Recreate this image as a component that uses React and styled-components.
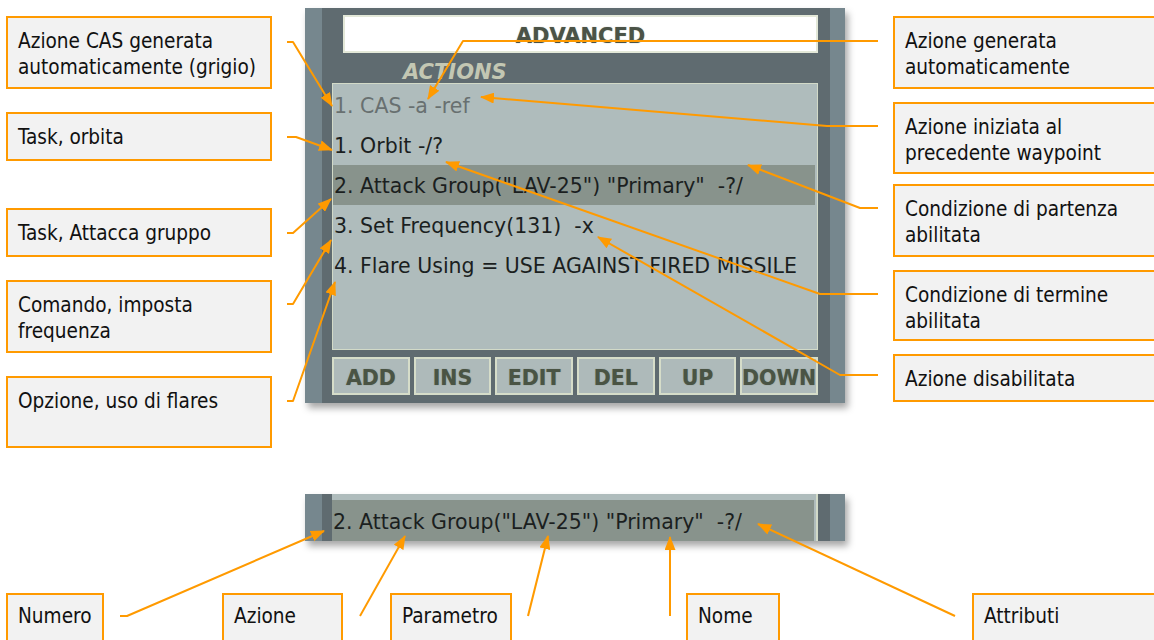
import React from 'react'
import styled, { createGlobalStyle } from 'styled-components'

const GlobalStyle = createGlobalStyle`
  html, body {
    margin: 0;
    padding: 0;
    background: #ffffff;
  }
  body {
    overflow: hidden;
  }
`

const Page = styled.div`
  position: relative;
  width: 1154px;
  height: 640px;
  overflow: hidden;
  background: #ffffff;
`

const Top = styled.div`
  display: flex;
  align-items: flex-start;
  padding-left: 6px;
`

const NoteColumn = styled.div`
  display: flex;
  flex-direction: column;
  flex-shrink: 0;
  width: ${p => p.$width}px;
  margin-left: ${p => p.$offset || 0}px;
  padding-top: 16px;
`

const Note = styled.div`
  box-sizing: border-box;
  flex-shrink: 0;
  height: ${p => p.$h}px;
  margin-top: ${p => p.$mt || 0}px;
  border: 2px solid #ff9a00;
  background: #f2f2f2;
  padding: 10px 10px 0 10px;
  font-family: "DejaVu Sans Condensed", "DejaVu Sans", sans-serif;
  font-stretch: condensed;
  font-size: 20.6px;
  line-height: 26px;
  color: #111111;
`

const Frame = styled.div`
  flex-shrink: 0;
  box-sizing: border-box;
  width: 540px;
  margin: ${p => p.$margin};
  border-left: 17px solid #76878e;
  border-right: 15px solid #76878e;
  background: #5f6b70;
  padding: ${p => p.$pad};
  box-shadow: 3px 5px 7px rgba(0, 0, 0, 0.35);
  font-family: "DejaVu Sans", sans-serif;
`

const TitleBox = styled.div`
  box-sizing: border-box;
  height: 38px;
  margin: 7px 0 0 11px;
  background: #ffffff;
  border: 2px solid #e3e8d8;
  padding-top: 7px;
  text-align: center;
  font-size: 21px;
  line-height: 24px;
  font-weight: bold;
  color: #4b5347;
  text-shadow: 0 0 1px rgba(60, 70, 55, 0.6);
`

const SectionLabel = styled.div`
  box-sizing: border-box;
  height: 30px;
  padding: 8px 0 0 71px;
  line-height: 22px;
  font-size: 21px;
  font-weight: bold;
  font-style: italic;
  color: #c3c7b3;
`

const List = styled.div`
  box-sizing: border-box;
  height: 267px;
  border: 1px solid #d2dac8;
  background: #afbcbc;
  padding-top: 1px;
`

const Row = styled.div`
  box-sizing: border-box;
  height: ${p => p.$h || 40}px;
  display: flex;
  align-items: center;
  padding: 2px 0 0 1px;
  margin-right: 2px;
  white-space: pre;
  font-size: 20.5px;
  color: ${p => (p.$auto ? '#687070' : '#1b1f1f')};
  background: ${p => (p.$active ? '#88938c' : 'transparent')};
`

const ButtonBar = styled.div`
  display: grid;
  grid-template-columns: repeat(6, 1fr);
  column-gap: 4px;
  height: 38px;
  margin-top: 7px;
`

const PanelButton = styled.div`
  box-sizing: border-box;
  display: flex;
  align-items: center;
  justify-content: center;
  overflow: hidden;
  white-space: nowrap;
  padding-top: 3px;
  border: 2px solid #d6ddc9;
  background: #aebaba;
  font-size: 20.5px;
  font-weight: bold;
  color: #4a5444;
  text-shadow: 0 0 1px rgba(60, 70, 55, 0.5);
`

const StripList = styled.div`
  background: #afbcbc;
  border-right: 2px solid #d2dac8;
  padding-top: 6px;
`

const LabelRow = styled.div`
  display: flex;
  padding-left: 6px;
  margin-top: 52px;
`

const Labelled = styled(Note)`
  width: ${p => p.$w}px;
  margin-left: ${p => p.$ml || 0}px;
  padding-top: 8px;
`

const Overlay = styled.svg`
  position: absolute;
  left: 0;
  top: 0;
  pointer-events: none;
`

const leftNotes = [
  { h: 73, mt: 0, text: ['Azione CAS generata', 'automaticamente (grigio)'] },
  { h: 49, mt: 23, text: ['Task, orbita'] },
  { h: 49, mt: 47, text: ['Task, Attacca gruppo'] },
  { h: 73, mt: 23, text: ['Comando, imposta', 'frequenza'] },
  { h: 72, mt: 23, text: ['Opzione, uso di flares'] },
]

const rightNotes = [
  { h: 73, mt: 0, text: ['Azione generata', 'automaticamente'] },
  { h: 72, mt: 13, text: ['Azione iniziata al', 'precedente waypoint'] },
  { h: 73, mt: 10, text: ['Condizione di partenza', 'abilitata'] },
  { h: 71, mt: 13, text: ['Condizione di termine', 'abilitata'] },
  { h: 48, mt: 13, text: ['Azione disabilitata'] },
]

const actions = [
  { text: '1. CAS -a -ref', auto: true },
  { text: '1. Orbit -/?' },
  { text: '2. Attack Group("LAV-25") "Primary"  -?/', active: true },
  { text: '3. Set Frequency(131)  -x' },
  { text: '4. Flare Using = USE AGAINST FIRED MISSILE' },
]

const buttons = ['ADD', 'INS', 'EDIT', 'DEL', 'UP', 'DOWN']

const bottomLabels = [
  { w: 98, ml: 0, text: 'Numero' },
  { w: 121, ml: 118, text: 'Azione' },
  { w: 122, ml: 47, text: 'Parametro' },
  { w: 94, ml: 174, text: 'Nome' },
  { w: 240, ml: 192, text: 'Attributi' },
]

// connector lines, page coordinates, last point is the arrow tip
const connectors = [
  [[287, 42], [293, 42], [332, 106]],
  [[287, 137], [296, 137], [332, 150]],
  [[287, 233], [293, 233], [331, 199]],
  [[287, 304], [293, 304], [331, 240]],
  [[287, 401], [293, 401], [335, 282]],
  [[878, 41], [463, 41], [428, 99]],
  [[878, 126], [827, 126], [481, 97]],
  [[878, 208], [860, 208], [748, 165]],
  [[878, 294], [820, 294], [446, 162]],
  [[878, 375], [840, 375], [598, 237]],
  [[120, 616], [127, 616], [324, 531]],
  [[360, 616], [405, 536]],
  [[528, 616], [548, 536]],
  [[670, 616], [670, 537]],
  [[955, 616], [758, 524]],
]

const NoteText = ({ lines }) =>
  lines.map((l, i) => <div key={i}>{l}</div>)

export default function App() {
  return (
    <Page>
      <GlobalStyle />
      <Top>
        <NoteColumn $width={266}>
          {leftNotes.map((n, i) => (
            <Note key={i} $h={n.h} $mt={n.mt}>
              <NoteText lines={n.text} />
            </Note>
          ))}
        </NoteColumn>

        <Frame $margin="8px 0 0 33px" $pad="0 12px 8px 10px">
          <TitleBox>ADVANCED</TitleBox>
          <SectionLabel>ACTIONS</SectionLabel>
          <List>
            {actions.map((a, i) => (
              <Row key={i} $auto={a.auto} $active={a.active}>
                {a.text}
              </Row>
            ))}
          </List>
          <ButtonBar>
            {buttons.map(b => (
              <PanelButton key={b}>{b}</PanelButton>
            ))}
          </ButtonBar>
        </Frame>

        <NoteColumn $width={300} $offset={48}>
          {rightNotes.map((n, i) => (
            <Note key={i} $h={n.h} $mt={n.mt}>
              <NoteText lines={n.text} />
            </Note>
          ))}
        </NoteColumn>
      </Top>

      <Frame $margin="46px 0 0 305px" $pad="0 12px 0 10px">
        <StripList>
          <Row $active $h={41}>
            {'2. Attack Group("LAV-25") "Primary"  -?/'}
          </Row>
        </StripList>
      </Frame>

      <LabelRow>
        {bottomLabels.map(l => (
          <Labelled key={l.text} $h={60} $w={l.w} $ml={l.ml}>
            {l.text}
          </Labelled>
        ))}
      </LabelRow>

      <Overlay width="1154" height="640" viewBox="0 0 1154 640">
        <defs>
          <marker
            id="tip"
            markerUnits="userSpaceOnUse"
            markerWidth="14"
            markerHeight="11"
            refX="13"
            refY="5.5"
            orient="auto"
          >
            <path d="M0,0 L14,5.5 L0,11 Z" fill="#ff9a00" />
          </marker>
        </defs>
        {connectors.map((pts, i) => (
          <polyline
            key={i}
            points={pts.map(p => p.join(',')).join(' ')}
            fill="none"
            stroke="#ff9a00"
            strokeWidth="2"
            strokeLinejoin="round"
            markerEnd="url(#tip)"
          />
        ))}
      </Overlay>
    </Page>
  )
}
